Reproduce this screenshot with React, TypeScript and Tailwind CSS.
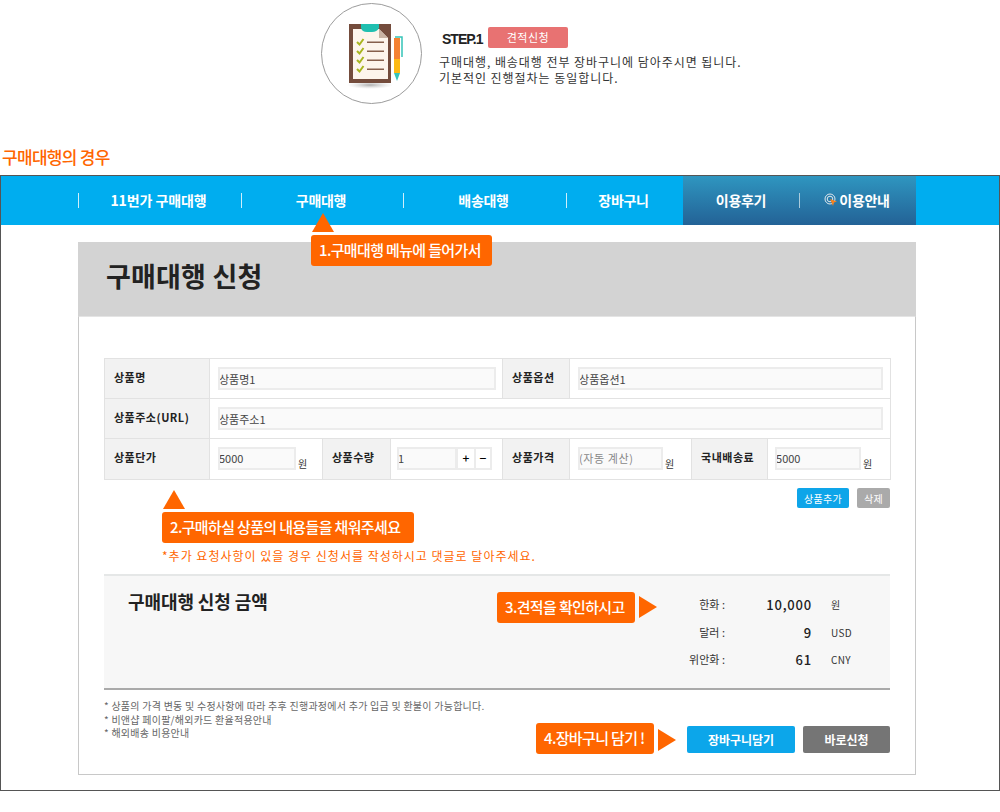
const ko = "font-['Noto_Sans_CJK_KR','Noto_Sans',sans-serif]";

function ClipboardIcon() {
  return (
    <svg width="102" height="102" viewBox="321 3 102 102" className="shrink-0">
      <defs>
        <radialGradient id="shadow">
          <stop offset="0%" stopColor="#999" stopOpacity="0.8" />
          <stop offset="100%" stopColor="#ccc" stopOpacity="0" />
        </radialGradient>
      </defs>
      <circle cx="371.5" cy="53.5" r="50" fill="#fff" stroke="#9c9c9c" strokeWidth="1" />
      <ellipse cx="370" cy="85" rx="23" ry="4" fill="url(#shadow)" />
      <rect x="349" y="24" width="42" height="59" fill="#744c3c" />
      <path d="M353 29H379L388 38V79H353Z" fill="#fdf5ec" />
      <path d="M379 29L388 38H379Z" fill="#c9b3a3" />
      <path d="M361 24H379V28Q377 32 372 32H367Q362 32 361 28Z" fill="#20bfb0" />
      {[42, 51, 60, 69].map((y) => (
        <g key={y}>
          <path d={`M357 ${y}L359.5 ${y + 2.5}L363.5 ${y - 3}`} fill="none" stroke="#a9b51f" strokeWidth="2" />
          <rect x="367" y={y - 0.5} width="17" height="1.5" fill="#86604c" />
        </g>
      ))}
      <path d="M395 37H402V57" fill="none" stroke="#35c4b8" strokeWidth="1.5" />
      <rect x="394" y="38" width="6" height="21" fill="#f58233" />
      <rect x="394" y="59" width="6" height="14" fill="#fdb913" />
      <path d="M394 73H400L397 81Z" fill="#35c4b8" />
    </svg>
  );
}

function GuideIcon() {
  return (
    <svg width="14" height="14" viewBox="0 0 14 14" className="ml-[-2px] mr-px shrink-0">
      <circle cx="6" cy="6" r="5" fill="none" stroke="#dfe7ee" strokeWidth="1" />
      <circle cx="6" cy="6" r="2.8" fill="none" stroke="#dfe7ee" strokeWidth="1" />
      <path d="M6 6L13 8.5L10 9.5L9 13Z" fill="#f58220" />
    </svg>
  );
}

function Callout({ children, className }: { children: React.ReactNode; className?: string }) {
  return (
    <div
      className={`flex h-[31px] items-center rounded-[3px] bg-[#ff6600] px-2 text-[15px] font-medium tracking-[-0.65px] text-white ${className ?? ""}`}
    >
      {children}
    </div>
  );
}

function ArrowRight({ className }: { className?: string }) {
  return (
    <svg width="18" height="22" viewBox="0 0 18 22" className={className}>
      <path d="M0 0L18 11L0 22Z" fill="#ff6600" />
    </svg>
  );
}

function ArrowUp({ className }: { className?: string }) {
  return (
    <svg width="22" height="19" viewBox="0 0 22 19" className={className}>
      <path d="M11 0L22 19H0Z" fill="#ff6600" />
    </svg>
  );
}

function Field({ value, className }: { value: string; className?: string }) {
  return (
    <input
      readOnly
      value={value}
      className={`h-[23px] border-2 border-[#ececec] bg-[#fafafa] px-0 indent-[-1px] text-[11px] text-[#444] outline-none ${className ?? ""}`}
    />
  );
}

function Th({ children }: { children: React.ReactNode }) {
  return (
    <th className="border border-[#e2e2e2] bg-[#f2f2f2] pb-[3px] pl-[9px] text-left align-middle text-[11px] font-bold tracking-[0.5px] text-[#222]">
      {children}
    </th>
  );
}

function Td({ children, colSpan }: { children: React.ReactNode; colSpan?: number }) {
  return (
    <td colSpan={colSpan} className="border border-[#e2e2e2] pb-[2px] pl-2 align-middle">
      {children}
    </td>
  );
}

function Money({ value, className }: { value: string; className?: string }) {
  return (
    <div className="flex items-end">
      <Field value={value} className={className} />
      <span className="mb-[-1px] ml-[2px] text-[10px] text-[#333]">원</span>
    </div>
  );
}

const navItems = [
  { label: "11번가 구매대행", cls: "w-[163px] border-l pr-[3px] tracking-[-0.1px]" },
  { label: "구매대행", cls: "w-[162px] border-l pr-[3px]" },
  { label: "배송대행", cls: "w-[163px] border-l pr-[3px]" },
  { label: "장바구니", cls: "w-[117px] border-l pr-[3px]" },
];

const rates = [
  { label: "한화 :", value: "10,000", unit: "원" },
  { label: "달러 :", value: "9", unit: "USD" },
  { label: "위안화 :", value: "61", unit: "CNY" },
];

export default function App() {
  return (
    <div className={`h-[812px] w-[1000px] bg-white ${ko}`}>
      <div className="flex h-[145px] pl-[321px] pt-[3px]">
        <ClipboardIcon />
        <div className="ml-4 pt-6">
          <div className="ml-[3px] flex h-[21px] items-center">
            <span className="w-[46px] pt-[3px] font-['Liberation_Sans',sans-serif] text-[14px] font-bold tracking-[-1px] text-[#222]">STEP.1</span>
            <span className="flex h-[21px] w-20 items-center justify-center rounded-[2px] bg-[#e87272] pb-px text-[11px] tracking-[0.5px] text-white">
              견적신청
            </span>
          </div>
          <p className="mt-[6px] text-[12px] leading-[16px] tracking-[0.95px] text-[#333]">
            구매대행, 배송대행 전부 장바구니에 담아주시면 됩니다.
            <br />
            기본적인 진행절차는 동일합니다.
          </p>
        </div>
      </div>

      <h2 className="ml-[2px] h-[30px] text-[17px] font-medium leading-[24px] tracking-[-0.7px] text-[#ff6600]">구매대행의 경우</h2>

      <div className="relative h-[616px] w-[1000px] border border-[#555]">
        <nav className="flex h-[49px] bg-[#00adef] pl-[77px] text-[14px] font-bold tracking-[-0.3px] text-white">
          {navItems.map((item) => (
            <div key={item.label} className="flex h-full items-center pb-px">
              <div className={`flex h-[15px] items-center justify-center border-[#cfeefb] ${item.cls}`}>{item.label}</div>
            </div>
          ))}
          <div className="flex w-[233px] items-center bg-gradient-to-b from-[#2f96c0] to-[#236296] pb-px">
            <div className="flex h-[15px] w-[116px] items-center justify-center">이용후기</div>
            <div className="flex h-[15px] w-[117px] items-center justify-center border-l border-[#a9cbdc]">
              <GuideIcon />
              이용안내
            </div>
          </div>
        </nav>

        <div className="absolute left-[310px] top-[37px] flex flex-col">
          <ArrowUp className="ml-px" />
          <Callout className="mt-[3px] w-[181px]">1.구매대행 메뉴에 들어가서</Callout>
        </div>

        <div className="ml-[77px] mt-[17px] w-[838px]">
          <div className="flex h-[74px] items-center bg-[#d3d3d3] pb-[5px] pl-7">
            <h1 className="text-[27px] font-bold tracking-[0.2px] text-[#222]">구매대행 신청</h1>
          </div>
          <div className="h-[459px] border border-[#c8c8c8] border-t-[#e4e4e4] px-[25px] pt-[41px]">
            <table className="h-[121px] w-[786px] table-fixed border-collapse">
              <colgroup>
                <col className="w-[105px]" />
                <col className="w-[113px]" />
                <col className="w-[68px]" />
                <col className="w-[112px]" />
                <col className="w-[67px]" />
                <col className="w-[122px]" />
                <col className="w-[76px]" />
                <col className="w-[123px]" />
              </colgroup>
              <tbody>
                <tr className="h-10">
                  <Th>상품명</Th>
                  <Td colSpan={3}>
                    <Field value="상품명1" className="w-[278px]" />
                  </Td>
                  <Th>상품옵션</Th>
                  <Td colSpan={3}>
                    <Field value="상품옵션1" className="w-[305px]" />
                  </Td>
                </tr>
                <tr className="h-10">
                  <Th>상품주소(URL)</Th>
                  <Td colSpan={7}>
                    <Field value="상품주소1" className="w-[665px]" />
                  </Td>
                </tr>
                <tr className="h-[41px]">
                  <Th>상품단가</Th>
                  <Td>
                    <Money value="5000" className="w-[78px]" />
                  </Td>
                  <Th>상품수량</Th>
                  <Td>
                    <div className="ml-[-2px] flex">
                      <Field value="1" className="w-[60px]" />
                      <span className="flex h-[23px] w-[17px] items-center justify-center border-y-2 border-l border-[#ececec] text-[12px] font-medium leading-none">+</span>
                      <span className="flex h-[23px] w-[18px] items-center justify-center border-2 border-[#ececec] text-[12px] font-medium leading-none">−</span>
                    </div>
                  </Td>
                  <Th>상품가격</Th>
                  <Td>
                    <Money value="(자동 계산)" className="w-[85px] tracking-[0.6px] text-[#888]" />
                  </Td>
                  <Th>국내배송료</Th>
                  <Td>
                    <Money value="5000" className="ml-[-1px] w-[86px]" />
                  </Td>
                </tr>
              </tbody>
            </table>

            <div className="mt-2 flex justify-end gap-2 text-[10px] text-white">
              <button className="flex h-5 w-[52px] items-center justify-center rounded-[2px] bg-[#0ea5e9] tracking-[0.3px]">상품추가</button>
              <button className="flex h-5 w-[33px] items-center justify-center rounded-[2px] bg-[#aaaaaa] tracking-[0.3px]">삭제</button>
            </div>

            <div className="ml-[58px] mt-[-18px] flex flex-col items-start">
              <ArrowUp className="ml-px" />
              <Callout className="mt-[3px] w-[252px]">2.구매하실 상품의 내용들을 채워주세요</Callout>
              <p className="mt-[4px] text-[12px] leading-[18px] tracking-[1px] text-[#ff6600]">*추가 요청사항이 있을 경우 신청서를 작성하시고 댓글로 달아주세요.</p>
            </div>

            <section className="mt-[9px] flex h-[116px] border-y-2 border-b-[#aaaaaa] border-t-[#e5e7e7] bg-[#f7f7f7] pl-6">
              <h3 className="w-[369px] pt-[12px] text-[18px] font-bold tracking-[-0.1px] text-[#222]">구매대행 신청 금액</h3>
              <div className="flex items-start pt-[16px]">
                <Callout className="w-[138px]">3.견적을 확인하시고</Callout>
                <ArrowRight className="ml-1 mt-[4px]" />
              </div>
              <div className="ml-[25px] grid grid-cols-[43px_87px_auto] content-start gap-y-[10.5px] pt-[20px] text-[11px] leading-[17px] text-[#333]">
                {rates.map((r) => (
                  <div key={r.label} className="contents">
                    <span className="whitespace-nowrap text-right">{r.label}</span>
                    <span className="text-right text-[13px] font-medium tracking-[0.8px] text-[#222]">{r.value}</span>
                    <span className="pl-[19px] text-[10px] tracking-[0.3px]">{r.unit}</span>
                  </div>
                ))}
              </div>
            </section>

            <div className="flex justify-between pt-[9px]">
              <ul className="text-[10px] leading-[13.5px] tracking-[0.25px] text-[#666]">
                <li>* 상품의 가격 변동 및 수정사항에 따라 추후 진행과정에서 추가 입금 및 환불이 가능합니다.</li>
                <li>* 비앤샵 페이팔/해외카드 환율적용안내</li>
                <li>* 해외배송 비용안내</li>
              </ul>
              <div className="flex items-center pt-6">
                <Callout className="w-[118px]">4.장바구니 담기 !</Callout>
                <ArrowRight className="ml-1 mt-[2px]" />
                <button className="ml-[11px] mt-[2px] flex h-[27px] w-[108px] items-center justify-center rounded-[2px] bg-[#0ca6ea] text-[12px] font-bold text-white">장바구니담기</button>
                <button className="ml-2 mt-[2px] flex h-[27px] w-[87px] items-center justify-center rounded-[2px] bg-[#757575] text-[12px] font-bold text-white">바로신청</button>
              </div>
            </div>
          </div>
        </div>
      </div>
    </div>
  );
}
